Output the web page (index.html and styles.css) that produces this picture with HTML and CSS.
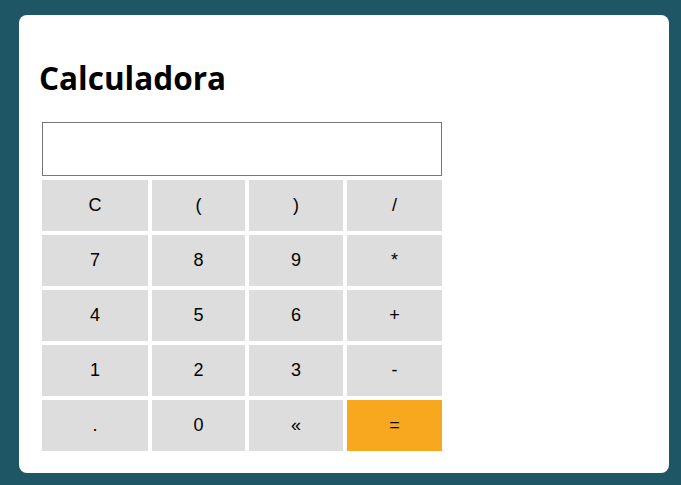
FILE: index.html
```html
<!DOCTYPE html>
<html lang="es">
<head>
<meta charset="utf-8">
<title>Calculadora</title>
<link rel="stylesheet" href="styles.css">
</head>
<body>
<main class="card">
  <h1 class="title">Calculadora</h1>
  <div class="calc">
    <input class="display" type="text" aria-label="Resultado">
    <div class="keys">
      <button class="key">C</button>
      <button class="key">(</button>
      <button class="key">)</button>
      <button class="key">/</button>
      <button class="key">7</button>
      <button class="key">8</button>
      <button class="key">9</button>
      <button class="key">*</button>
      <button class="key">4</button>
      <button class="key">5</button>
      <button class="key">6</button>
      <button class="key">+</button>
      <button class="key">1</button>
      <button class="key">2</button>
      <button class="key">3</button>
      <button class="key">-</button>
      <button class="key">.</button>
      <button class="key">0</button>
      <button class="key">&laquo;</button>
      <button class="key key-equals">=</button>
    </div>
  </div>
</main>
</body>
</html>
```

FILE: styles.css
```css
html, body {
  margin: 0;
  padding: 0;
}
body {
  background: #1f5665;
  font-family: "Liberation Sans", Arial, sans-serif;
  padding: 15px 12px 12px 19px;
}
.card {
  background: #ffffff;
  border-radius: 8px;
  padding: 18px 20px 21px;
  height: 419px;
}
.title {
  font-family: "Open Sans", sans-serif;
  font-weight: 700;
  font-size: 31.5px;
  margin: 23px 0 21px;
  color: #000;
}
.calc {
  width: 400px;
  margin-left: 3px;
  padding-top: 2px;
  display: flex;
  flex-direction: column;
  gap: 4px;
}
.display {
  box-sizing: border-box;
  width: 400px;
  height: 54px;
  margin: 0;
  border: 1px solid #767676;
  padding: 2px 6px;
  font-size: 18px;
  font-family: "Liberation Sans", Arial, sans-serif;
  outline: none;
}
.keys {
  display: grid;
  grid-template-columns: 106px 93px 94px 95px;
  grid-auto-rows: 51px;
  gap: 4px;
}
.key {
  margin: 0;
  border: none;
  background: #dddddd;
  font-family: "Liberation Sans", Arial, sans-serif;
  font-size: 18px;
  color: #000;
  padding: 0;
}
.key-equals {
  background: #f7a81f;
}
```
